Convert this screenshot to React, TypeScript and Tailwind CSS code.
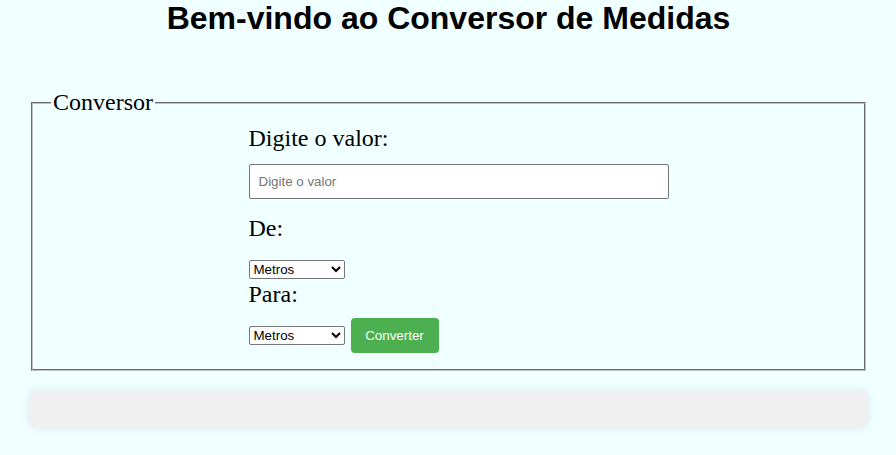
import React from "react";

export default function App() {
  return (
    <div className="min-h-[455px] w-full bg-[#F0FFFF] pl-[29px] pr-[28px]">
      <h1 className="text-center text-[32px] leading-[37px] font-bold text-black [font-family:'Liberation_Sans',Arial,sans-serif]">
        Bem-vindo ao Conversor de Medidas
      </h1>
      <fieldset className="mx-[2px] mt-[52px] border-2 [border-style:groove] border-[#c0c0c0] px-[18px] pt-[9px] pb-[16px] text-[24px] text-black [font-family:'Liberation_Serif','Times_New_Roman',serif]">
        <legend className="px-[2px] leading-[27px]">Conversor</legend>
        <div className="mx-auto flex w-[400px] flex-col items-start">
          <label className="block leading-[27px]">Digite o valor:</label>
          <input
            type="text"
            placeholder="Digite o valor"
            className="mt-[12px] box-border h-[35px] w-[420px] rounded-[2px] border border-[#767676] bg-white px-[9px] text-[13.33px] text-black placeholder:text-[#757575] [font-family:'Liberation_Sans',Arial,sans-serif]"
          />
          <label className="mt-[16px] block leading-[27px]">De:</label>
          <select className="mt-[18px] box-border h-[19px] w-[96px] rounded-[2px] border border-[#767676] bg-white text-[13.33px] text-black [font-family:'Liberation_Sans',Arial,sans-serif]">
            <option>Metros</option>
            <option>Centímetros</option>
            <option>Quilômetros</option>
          </select>
          <label className="mt-[2px] block leading-[27px]">Para:</label>
          <div className="mt-[10px] flex items-center">
            <select className="box-border h-[19px] w-[96px] rounded-[2px] border border-[#767676] bg-white text-[13.33px] text-black [font-family:'Liberation_Sans',Arial,sans-serif]">
              <option>Metros</option>
              <option>Centímetros</option>
              <option>Quilômetros</option>
            </select>
            <button className="ml-[6px] h-[35px] w-[88px] rounded-[4px] bg-[#4CAF50] text-[13.33px] text-white [font-family:'Liberation_Sans',Arial,sans-serif]">
              Converter
            </button>
          </div>
        </div>
      </fieldset>
      <div className="mt-[20px] h-[37px] rounded-[8px] bg-[#f0f0f0] shadow-[0_0_10px_rgba(0,0,0,0.1)]"></div>
    </div>
  );
}
